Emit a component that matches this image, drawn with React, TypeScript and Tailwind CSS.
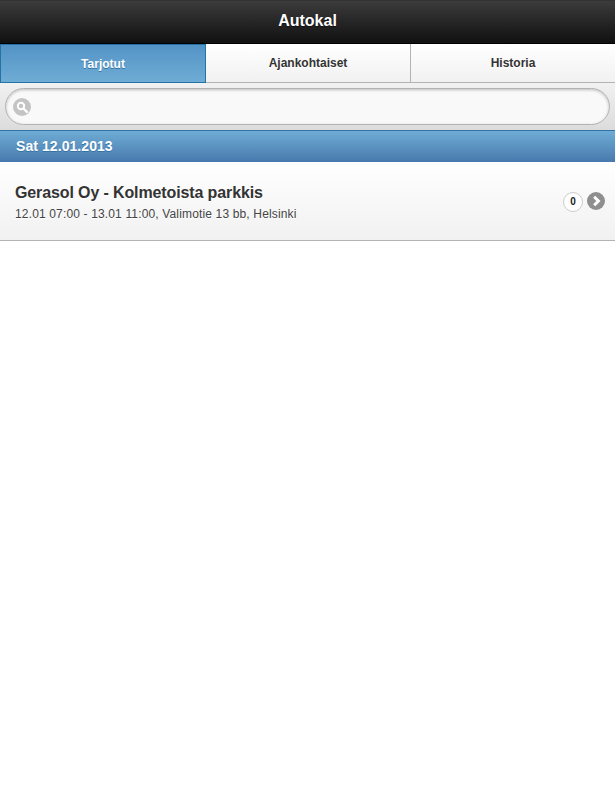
const tabs = ["Tarjotut", "Ajankohtaiset", "Historia"];

export default function App() {
  return (
    <div className="min-h-[803px] bg-white font-['Liberation_Sans',Arial,sans-serif] text-[#222]">
      <header className="flex h-[44px] items-center justify-center border-y border-t-[#333] border-b-black bg-gradient-to-b from-[#3c3c3c] to-[#111] pb-[3px]">
        <h1 className="text-[16px] font-bold text-white [text-shadow:0_1px_1px_#111]">Autokal</h1>
      </header>

      <nav className="flex h-[39px]">
        {tabs.map((tab, i) => (
          <div
            key={tab}
            className={
              i === 0
                ? "flex flex-1 items-center justify-center border border-[#2373a5] bg-gradient-to-b from-[#5393c5] to-[#6facd5] text-[12px] font-bold text-white [text-shadow:0_1px_0_#3373a5]"
                : i === 1
                  ? "flex flex-1 items-center justify-center border-r border-b border-[#b3b3b3] bg-gradient-to-b from-white to-[#f1f1f1] text-[12px] font-bold text-[#333] [text-shadow:0_1px_0_#fff]"
                  : "flex flex-1 items-center justify-center border-b border-[#b3b3b3] bg-gradient-to-b from-white to-[#f1f1f1] text-[12px] font-bold text-[#333] [text-shadow:0_1px_0_#fff]"
            }
          >
            {tab}
          </div>
        ))}
      </nav>

      <div className="bg-gradient-to-b from-[#f1f1f1] to-[#dcdcdc] px-[5px] py-[5px]">
        <div className="flex h-[37px] items-center rounded-full border border-[#b3b3b3] bg-[#f9f9f9] pl-[7px] shadow-[inset_0_1px_3px_rgba(0,0,0,0.25)]">
          <span className="flex h-[18px] w-[18px] items-center justify-center rounded-full bg-[#c4c4c4]">
            <svg width="14" height="14" viewBox="0 0 14 14" fill="none">
              <circle cx="6" cy="6" r="3.2" stroke="white" strokeWidth="2" />
              <path d="M8.5 8.5 L12 12" stroke="white" strokeWidth="2.4" strokeLinecap="round" />
            </svg>
          </span>
        </div>
      </div>

      <div className="flex h-[32px] items-center border-y border-t-[#3373a5] border-b-[#497bae] bg-gradient-to-b from-[#6facd5] to-[#497bae] pl-[16px] text-[14px] font-bold tracking-[0.07px] text-white [text-shadow:0_1px_0_#3373a5]">
        Sat 12.01.2013
      </div>

      <div className="flex h-[79px] items-center justify-between border-b border-[#b3b3b3] bg-gradient-to-b from-white to-[#f1f1f1] pl-[15px] pr-[10px]">
        <div className="pt-[3px]">
          <h2 className="text-[16px] leading-[20px] font-bold tracking-[-0.12px] text-[#333] [text-shadow:0_1px_0_#fff]">Gerasol Oy - Kolmetoista parkkis</h2>
          <p className="mt-[3px] text-[12px] leading-[16px] tracking-[0.15px] text-[#444] [text-shadow:0_1px_0_#fff]">
            12.01 07:00 - 13.01 11:00, Valimotie 13 bb, Helsinki
          </p>
        </div>
        <div className="flex items-center gap-[4px]">
          <span className="mt-[1px] flex h-[20px] w-[20px] items-center justify-center rounded-full border border-[#ccc] bg-white text-[10px] font-bold text-[#222]">
            0
          </span>
          <span className="flex h-[18px] w-[18px] items-center justify-center rounded-full bg-[#8f8f8f]">
            <svg width="12" height="12" viewBox="0 0 12 12" fill="none">
              <path d="M4.2 1.8 L8.4 6 L4.2 10.2" stroke="white" strokeWidth="3" />
            </svg>
          </span>
        </div>
      </div>
    </div>
  );
}
